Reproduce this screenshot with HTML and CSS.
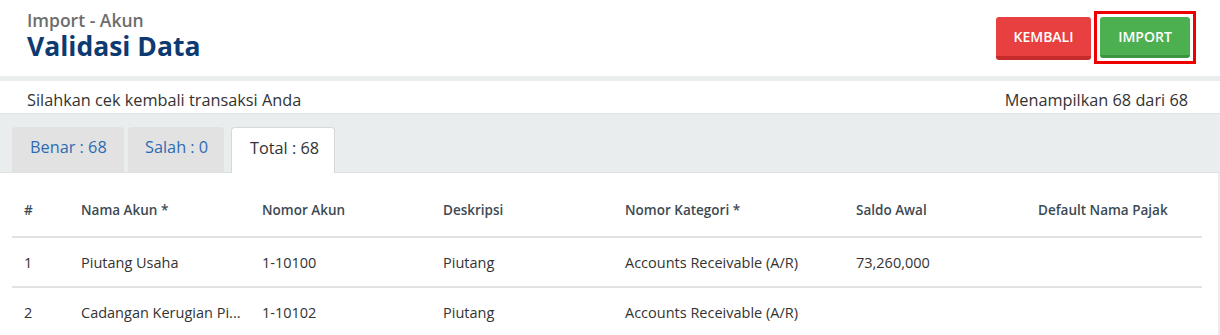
FILE: index.html
```html
<!DOCTYPE html>
<html lang="id">
<head>
    <meta charset="UTF-8">
    <title>Import - Akun | Validasi Data</title>
    <link rel="stylesheet" href="styles.css">
</head>
<body>
    <header class="page-header">
        <div class="titles">
            <div class="subtitle">Import - Akun</div>
            <h1>Validasi Data</h1>
        </div>
        <div class="actions">
            <button class="btn btn-red">KEMBALI</button>
            <span class="highlight"><button class="btn btn-green">IMPORT</button></span>
        </div>
    </header>

    <div class="info-bar">
        <span>Silahkan cek kembali transaksi Anda</span>
        <span>Menampilkan 68 dari 68</span>
    </div>

    <div class="tab-bar">
        <div class="tab tab-benar">Benar : 68</div>
        <div class="tab tab-salah">Salah : 0</div>
        <div class="tab tab-total active">Total : 68</div>
    </div>

    <div class="table-wrap">
        <table class="data-table">
            <thead>
                <tr>
                    <th class="col-no">#</th>
                    <th class="col-name">Nama Akun *</th>
                    <th class="col-num">Nomor Akun</th>
                    <th class="col-desc">Deskripsi</th>
                    <th class="col-cat">Nomor Kategori *</th>
                    <th class="col-saldo">Saldo Awal</th>
                    <th class="col-tax">Default Nama Pajak</th>
                </tr>
            </thead>
            <tbody>
                <tr>
                    <td>1</td>
                    <td>Piutang Usaha</td>
                    <td>1-10100</td>
                    <td>Piutang</td>
                    <td>Accounts Receivable (A/R)</td>
                    <td>73,260,000</td>
                    <td></td>
                </tr>
                <tr>
                    <td>2</td>
                    <td title="Cadangan Kerugian Piutang">Cadangan Kerugian Pi...</td>
                    <td>1-10102</td>
                    <td>Piutang</td>
                    <td>Accounts Receivable (A/R)</td>
                    <td></td>
                    <td></td>
                </tr>
            </tbody>
        </table>
    </div>
</body>
</html>
```

FILE: styles.css
```css
body {
    font-family: "Open Sans", Arial, sans-serif;
    margin: 0;
    padding: 0;
    background: #fff;
    color: #333;
}
.page-header {
    display: flex;
    justify-content: space-between;
    align-items: flex-start;
    padding: 11px 24px 0 27px;
    height: 65px;
    border-bottom: 5px solid #e9eded;
}
.subtitle {
    font-size: 17.5px;
    font-weight: 600;
    color: #6d6d6d;
    line-height: 19px;
}
.titles h1 {
    margin: 0;
    font-size: 26.5px;
    font-weight: 700;
    color: #0d3a70;
    line-height: 32px;
}
.actions {
    display: flex;
    align-items: flex-start;
    gap: 3px;
    padding-top: 6px;
}
.btn {
    font-family: inherit;
    font-size: 14px;
    font-weight: 600;
    color: #fff;
    border: none;
    border-radius: 3px;
    height: 43px;
    cursor: pointer;
}
.btn-red {
    width: 95px;
    background: #e84040;
    border-bottom: 4px solid #c62b2b;
}
.btn-green {
    width: 90px;
    height: 41px;
    background: #4caf50;
    border-bottom: 3px solid #3b9440;
}
.highlight {
    display: inline-block;
    margin-top: -6px;
    padding: 3px;
    border: 3px solid #ee0000;
}
.info-bar {
    display: flex;
    justify-content: space-between;
    align-items: center;
    box-sizing: border-box;
    height: 33px;
    padding: 5px 32px 0 27px;
    font-size: 16.3px;
    color: #333;
    border-bottom: 1px solid #e0e4e4;
}
.tab-bar {
    display: flex;
    gap: 4px;
    background: #e9eded;
    padding: 13px 0 0 12px;
    border-bottom: 1px solid #dde1e1;
}
.tab {
    box-sizing: border-box;
    background: #e2e2e2;
    color: #2d6bb3;
    font-size: 16.3px;
    padding: 0 0 0 18px;
    height: 45px;
    line-height: 41px;
    border-radius: 4px 4px 0 0;
}
.tab-benar { width: 112px; }
.tab-salah { width: 96px; padding-left: 17px; }
.tab.active {
    width: 104px;
    height: 46px;
    background: #fff;
    color: #333;
    border: 1px solid #d8d8d8;
    border-bottom: none;
    margin-left: 3px;
    margin-bottom: -1px;
}
.table-wrap {
    padding: 11px 16px 0 12px;
    border-right: 2px solid #ececec;
}
.data-table {
    width: 100%;
    border-collapse: collapse;
    font-size: 14.5px;
    color: #333;
}
.data-table th {
    text-align: left;
    font-size: 13.5px;
    font-weight: 600;
    color: #3c4a54;
    height: 52px;
    border-bottom: 2px solid #e2e2e2;
}
.data-table td {
    height: 48px;
    border-bottom: 2px solid #e2e2e2;
    white-space: nowrap;
}
.data-table th,
.data-table td {
    padding: 0 0 0 12px;
}
.col-no { width: 45px; }
.col-name { width: 169px; }
.col-num { width: 169px; }
.col-desc { width: 170px; }
.col-cat { width: 219px; }
.col-saldo { width: 170px; }
```
